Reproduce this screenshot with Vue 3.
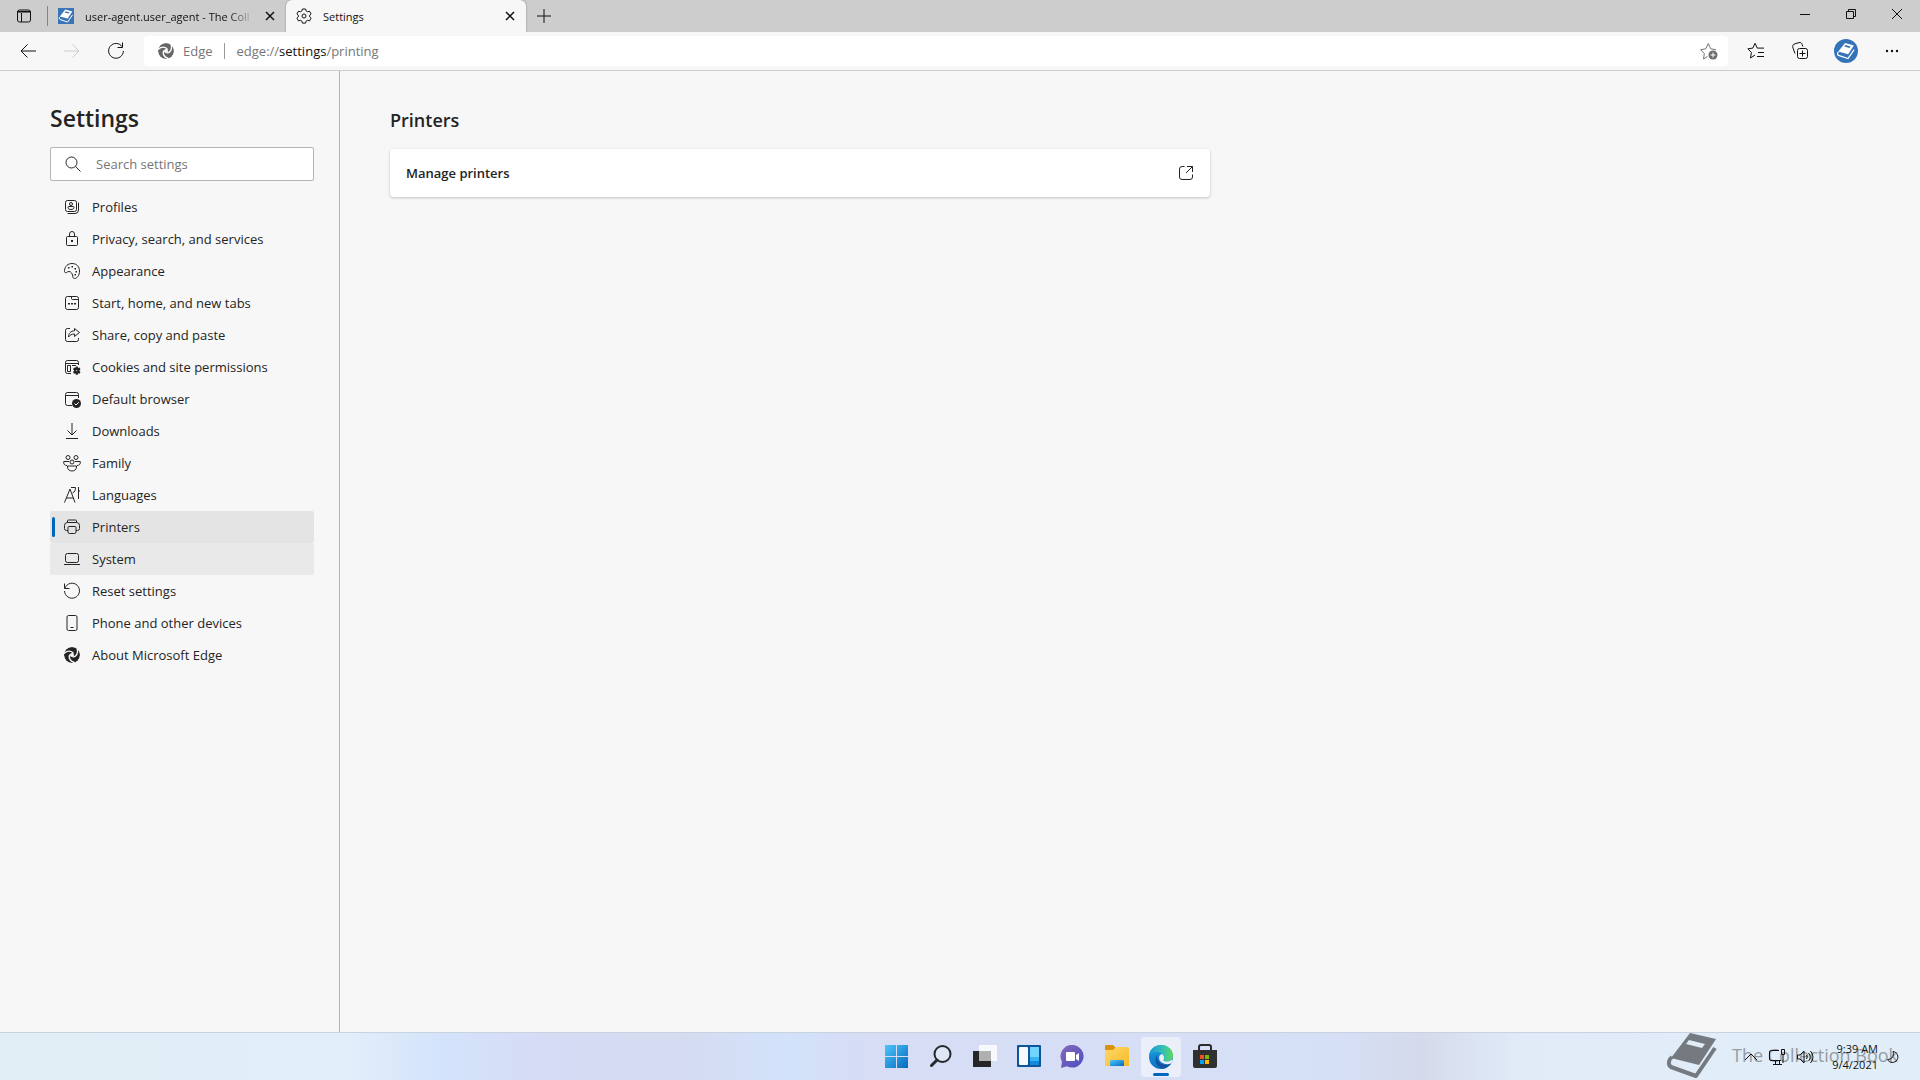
<template>
  <div class="desktop">
    <header class="tabstrip">
      <button class="tab-actions" aria-label="Tab actions menu">
        <svg width="18" height="18" viewBox="0 0 18 18">
          <rect x="2.5" y="3" width="13" height="12" rx="2" />
          <path d="M2.5 5h13M3 4.500h12M6.500 6v9" />
        </svg>
      </button>
      <div class="tab">
        <svg class="favicon" width="16" height="16" viewBox="0 0 16 16">
          <rect width="16" height="16" fill="#3a74b8" stroke="none" />
          <use href="#book" />
        </svg>
        <span class="tab-title faded">user-agent.user_agent - The Coll</span>
        <button class="close" aria-label="Close tab">
          <svg width="10" height="10" viewBox="0 0 10 10"><path d="M1 1l8 8M9 1l-8 8" /></svg>
        </button>
      </div>
      <div class="tab active">
        <svg class="favicon" width="16" height="16" viewBox="0 0 16 16">
          <path
            d="M6.400 1l-.5 1.900-1.500.9-1.900-.6L.9 5.900l1.400 1.300v1.700L.9 10.200l1.600 2.700 1.900-.6 1.500.9.500 1.900h3.200l.5-1.900 1.500-.9 1.900.6 1.600-2.700-1.400-1.300V7.200l1.400-1.300-1.600-2.700-1.900.6-1.500-.9L9.600 1z"
          />
          <circle cx="8" cy="8" r="2" />
        </svg>
        <span class="tab-title">Settings</span>
        <button class="close" aria-label="Close tab">
          <svg width="10" height="10" viewBox="0 0 10 10"><path d="M1 1l8 8M9 1l-8 8" /></svg>
        </button>
      </div>
      <button class="new-tab" aria-label="New tab">
        <svg width="14" height="14" viewBox="0 0 14 14"><path d="M7 0v14M0 7h14" /></svg>
      </button>
      <div class="window-controls">
        <button aria-label="Minimize">
          <svg width="10" height="10" viewBox="0 0 10 10"><path d="M0 5.500h10" /></svg>
        </button>
        <button aria-label="Restore">
          <svg width="10" height="10" viewBox="0 0 10 10">
            <path d="M.5 2.500h7v7h-7zM2.500 2.500v-2h7v7h-2" />
          </svg>
        </button>
        <button aria-label="Close">
          <svg width="10" height="10" viewBox="0 0 10 10"><path d="M0 0l10 10M10 0L0 10" /></svg>
        </button>
      </div>
    </header>

    <div class="toolbar">
      <button class="tool" aria-label="Back">
        <svg width="16" height="16" viewBox="0 0 16 16"><path d="M16 8H1M7.500 1.500L1 8l6.500 6.500" /></svg>
      </button>
      <button class="tool disabled" aria-label="Forward" disabled>
        <svg width="16" height="16" viewBox="0 0 16 16"><path d="M0 8h15M8.500 1.500L15 8l-6.500 6.500" /></svg>
      </button>
      <button class="tool" aria-label="Refresh">
        <svg width="18" height="18" viewBox="0 0 18 18">
          <path d="M15.200 4.800A7.400 7.400 0 1 0 16.400 9M15.500.5v5h-5" />
        </svg>
      </button>
      <div class="omnibox">
        <svg class="site" width="16" height="16" viewBox="0 0 16 16"><use href="#edge-mono" /></svg>
        <span class="site-name">Edge</span>
        <span class="url">edge://<b>settings</b>/printing</span>
        <button class="favorite" aria-label="Add this page to favorites">
          <svg width="18" height="18" viewBox="0 0 18 18">
            <path d="M7.500 14.500L3.500 17l.8-5.300L.7 7.700l5.100-.9L8.300 1.500l2.400 5.300 5.300.9" />
            <circle cx="13" cy="13" r="4.500" class="dot" />
            <path class="plus" d="M13 10.500v5M10.500 13h5" />
          </svg>
        </button>
      </div>
      <button class="tool" aria-label="Favorites">
        <svg width="18" height="18" viewBox="0 0 18 18">
          <path d="M8 13l-4.500 3 .9-5.500L.9 6.800l4.900-.7L8 1.300l2.300 4.800H17M11 10.500h6M10 14.500h7" />
        </svg>
      </button>
      <button class="tool" aria-label="Collections">
        <svg width="18" height="18" viewBox="0 0 18 18">
          <rect x="6.500" y="6.500" width="10" height="10" rx="2" />
          <path d="M11.500 8.500v6M8.500 11.500h6M4 11.500L2 6C1.200 3.500 2 2.300 4 1.800l4-1.200c1.800-.4 2.700.4 3.200 2l.6 1.900" />
        </svg>
      </button>
      <button class="tool profile" aria-label="Profile">
        <svg width="24" height="24" viewBox="0 0 24 24">
          <circle cx="12" cy="12" r="12" fill="#3573b9" />
          <g transform="translate(2 2) scale(1.250)"><use href="#book" /></g>
        </svg>
      </button>
      <button class="tool more" aria-label="Settings and more">
        <svg width="14" height="4" viewBox="0 0 14 4">
          <circle cx="2" cy="2" r="1.200" /><circle cx="7" cy="2" r="1.200" /><circle cx="12" cy="2" r="1.200" />
        </svg>
      </button>
    </div>

    <div class="page">
      <aside class="sidebar">
        <h1>Settings</h1>
        <label class="search">
          <svg width="16" height="16" viewBox="0 0 16 16">
            <circle cx="6.500" cy="6.500" r="5.500" /><path d="M10.500 10.500l5 5" />
          </svg>
          <input type="search" placeholder="Search settings" aria-label="Search settings" />
        </label>
        <nav>
          <a
            v-for="item in items"
            :key="item.label"
            href="#"
            :class="{ selected: item.label === selected, hovered: item.label === hovered }"
            @click.prevent="selected = item.label"
          >
            <svg width="18" height="18" viewBox="0 0 18 18">
              <path v-if="item.line" :d="item.line" />
              <path v-if="item.solid" class="solid" :d="item.solid" />
              <path v-if="item.mark" class="mark" :d="item.mark" />
              <g v-if="item.edge" transform="translate(1 1)"><use href="#edge-mono" /></g>
            </svg>
            <span>{{ item.label }}</span>
          </a>
        </nav>
      </aside>
      <main>
        <h2>Printers</h2>
        <a class="card" href="#">
          <span>Manage printers</span>
          <svg width="16" height="16" viewBox="0 0 16 16">
            <path d="M6.500 1.500H4A2.500 2.500 0 0 0 1.500 4v8A2.500 2.500 0 0 0 4 14.500h8a2.500 2.500 0 0 0 2.500-2.500V9.500M9 1.500h5.500V7M14.500 1.500L8 8" />
          </svg>
        </a>
      </main>
    </div>

    <footer class="taskbar">
      <div class="apps">
        <button aria-label="Start">
          <svg width="24" height="24" viewBox="0 0 24 24">
            <path fill="url(#win)" d="M0 0h11v11H0zM12 0h11v11H12zM0 12h11v11H0zM12 12h11v11H12z" />
          </svg>
        </button>
        <button aria-label="Search">
          <svg width="24" height="24" viewBox="0 0 24 24">
            <circle cx="13.500" cy="9" r="8" fill="#dfe6f5" stroke="#26282c" stroke-width="2" />
            <path d="M8 15l-5.500 5.500" stroke="#26282c" stroke-width="3" stroke-linecap="round" />
          </svg>
        </button>
        <button aria-label="Task view">
          <svg width="24" height="24" viewBox="0 0 24 24">
            <rect x="0" y="6" width="18" height="16" fill="#262626" />
            <rect x="6" y="0" width="18" height="16" fill="#fff" opacity=".8" />
            <rect x="6" y="6" width="12" height="10" fill="#b0b0b0" />
          </svg>
        </button>
        <button aria-label="Widgets">
          <svg width="24" height="24" viewBox="0 0 24 24">
            <rect y="0" width="24" height="22" rx="1" fill="#0f5597" />
            <rect x="2" y="2" width="9" height="18" rx="1" fill="#f5f9fd" />
            <rect x="13" y="2" width="9" height="10" fill="#6fd5ff" />
            <rect x="13" y="12" width="9" height="4" fill="#36b2f5" />
            <rect x="13" y="16" width="9" height="4" fill="#1489dc" />
          </svg>
        </button>
        <button aria-label="Chat">
          <svg width="24" height="24" viewBox="0 0 24 24">
            <path fill="url(#chat)" d="M11.500 0A11.300 11.300 0 1 1 6 21.300L0 23l1-6.200A11.300 11.300 0 0 1 11.500 0z" />
            <rect x="5" y="7" width="9" height="9" rx="1" fill="#fff" />
            <path fill="#fff" d="M15 10l3-2v8l-3-2z" />
          </svg>
        </button>
        <button aria-label="File Explorer">
          <svg width="24" height="24" viewBox="0 0 24 24">
            <path fill="#d9930f" d="M1 0h7l3 3v5H0V1z" />
            <path fill="url(#folder)" d="M11 2h12l1 1v18H0V5h8z" />
            <path fill="url(#win)" d="M6 15h12l1 1v5H5v-5z" />
          </svg>
        </button>
        <button class="running" aria-label="Microsoft Edge">
          <svg width="24" height="24" viewBox="0 0 24 24">
            <circle cx="12" cy="12" r="12" fill="url(#edge-blue)" />
            <path fill="url(#edge-green)" d="M0 10.500C1 4 6 0 12 0c7 0 12 5 12 10.800 0 4-3 5.700-6 5.700-2.600 0-4.300-.8-3.200-2.200C16.500 11 13 7 8.500 7 4.500 7 1.500 8.500 0 10.500z" />
            <path fill="#1252a0" d="M8.800 9.500C4.500 13 6.500 22 14 23.800c3.500-.5 6.500-2.700 8.200-5.200-6 3-12.200.8-13.700-4.600-.5-1.700-.4-3.200.3-4.500z" />
            <path fill="#e9eef9" d="M14.800 14.300C13.700 15.700 15.400 16.500 18 16.500c2 0 4-.7 5.100-1.900.5.8.2 2.700-1.200 4-5.400 1.600-10.600-.5-11.700-4.600-.5-2.200.5-4.500 2.400-5 2 .3 3.100 3 2.200 5.300z" />
          </svg>
        </button>
        <button aria-label="Microsoft Store">
          <svg width="24" height="24" viewBox="0 0 24 24">
            <path fill="none" stroke="#2b2b2b" stroke-width="2" d="M6 7V2a2 2 0 0 1 2-2h8a2 2 0 0 1 2 2v5" />
            <path fill="#303030" d="M0 5h24v16a2 2 0 0 1-2 2H2a2 2 0 0 1-2-2z" />
            <path fill="#f05022" d="M7 10h4v4H7z" /><path fill="#7fba00" d="M12 10h4v4h-4z" />
            <path fill="#00a4ef" d="M7 15h4v4H7z" /><path fill="#ffb900" d="M12 15h4v4h-4z" />
          </svg>
        </button>
      </div>
      <div class="tray">
        <button aria-label="Show hidden icons">
          <svg width="14" height="16" viewBox="0 0 14 16"><path d="M1 11l6-6 6 6" /></svg>
        </button>
        <button aria-label="Network">
          <svg width="18" height="18" viewBox="0 0 18 18">
            <path d="M11 2.500H3A1.500 1.500 0 0 0 1.500 4v7A1.500 1.500 0 0 0 3 12.500h10M5 16.500h9M7.500 13v3M11.500 13v3M13.500 1.500h3v5h-3zM15 7v8" />
          </svg>
        </button>
        <button aria-label="Volume">
          <svg width="18" height="18" viewBox="0 0 18 18">
            <path d="M1.500 7v4h2.500l4 4V3L4 7zM10.500 7q1.500 2 0 4M12.500 5q3.500 4 0 8M14.500 3q5 6 0 12" />
          </svg>
        </button>
        <div class="clock"><span>9:39 AM</span><span>9/4/2021</span></div>
        <button aria-label="Focus assist">
          <svg width="14" height="16" viewBox="0 0 14 16">
            <path d="M7 2.500a5.500 5.500 0 1 1-5.500 8C5 10.500 8.500 8 7 2.500z" />
          </svg>
        </button>
      </div>
      <div class="watermark">
        <svg width="50" height="46" viewBox="0 0 50 46">
          <path fill="#747a80" d="M23 0l26 6-17 26L4 25z" />
          <path fill="#e2ecf7" d="M22 7l16 4-3 4-16-4z" />
          <path fill="none" stroke="#747a80" stroke-width="4" stroke-linejoin="round" d="M5 24c-4 3-4 8-1 10l25 9 19-28" />
        </svg>
        <span>The Collection Book</span>
      </div>
    </footer>

    <svg class="defs" width="0" height="0" aria-hidden="true">
      <defs>
        <g id="book">
          <path fill="#fff" d="M7.300 1.500l7 2-4.600 7.100-7.900-2.200z" />
          <path fill="#3573b9" d="M7.500 3.200l4.200 1.200-.9 1.200-4.200-1.200z" />
          <path fill="none" stroke="#fff" stroke-width="1" d="M2 8.800c-1.200.9-.9 2.200 0 2.700l7.600 2.600 4.900-7.200" />
        </g>
        <mask id="blades" maskUnits="userSpaceOnUse" x="0" y="0" width="16" height="16">
          <circle cx="8" cy="8" r="8" fill="#fff" stroke="none" />
          <circle cx="8" cy="8" r="2" fill="#000" stroke="none" />
          <g fill="none" stroke="#000" stroke-width="1.400">
            <path d="M9.500 6.400C7.500 3.400 3.500 3.200 0 6.500" />
            <path d="M9.500 6.400C7.500 3.400 3.500 3.200 0 6.500" transform="rotate(120 8 8)" />
            <path d="M9.500 6.400C7.500 3.400 3.500 3.200 0 6.500" transform="rotate(240 8 8)" />
          </g>
        </mask>
        <g id="edge-mono">
          <circle cx="8" cy="8" r="8" mask="url(#blades)" />
        </g>
        <linearGradient id="win" x1="0" y1="0" x2="1" y2="1">
          <stop offset="0" stop-color="#4cc6fb" /><stop offset="1" stop-color="#0669bd" />
        </linearGradient>
        <linearGradient id="chat" x1="0" y1="0" x2="1" y2="1">
          <stop offset="0" stop-color="#8668b8" /><stop offset="1" stop-color="#4a50c4" />
        </linearGradient>
        <linearGradient id="folder" x1="0" y1="0" x2="1" y2="1">
          <stop offset="0" stop-color="#ffd967" /><stop offset="1" stop-color="#f5b92a" />
        </linearGradient>
        <linearGradient id="edge-blue" x1="0" y1="0" x2="0" y2="1">
          <stop offset="0" stop-color="#1ba3e0" /><stop offset="1" stop-color="#0c6fc4" />
        </linearGradient>
        <linearGradient id="edge-green">
          <stop offset="0" stop-color="#1c95d8" /><stop offset=".6" stop-color="#35c1b4" /><stop offset="1" stop-color="#62d957" />
        </linearGradient>
      </defs>
    </svg>
  </div>
</template>

<script setup>
import { ref } from "vue";

const selected = ref("Printers");
const hovered = ref("System");

const items = [
  {
    label: "Profiles",
    line: "M4.500 2.500h7a2 2 0 0 1 2 2v7a2 2 0 0 1-2 2h-7a2 2 0 0 1-2-2v-7a2 2 0 0 1 2-2zM15.500 4.500V12a3.500 3.500 0 0 1-3.500 3.500H4.500M8 4.500a1.500 1.500 0 1 1 0 3 1.500 1.500 0 0 1 0-3zM6 8.500h4a1 1 0 0 1 1 1c0 1.500-1.500 2-3 2s-3-.5-3-2a1 1 0 0 1 1-1z",
  },
  {
    label: "Privacy, search, and services",
    line: "M4.500 6.500h9a1 1 0 0 1 1 1v7a1 1 0 0 1-1 1h-9a1 1 0 0 1-1-1v-7a1 1 0 0 1 1-1zM6.500 6.500V4a2.500 2.500 0 0 1 5 0v2.500",
    solid: "M8 10h2v2H8z",
  },
  {
    label: "Appearance",
    line: "M1.500 8.500C2 4 5 1.500 9 1.500c5 0 7.500 3.500 7.500 7.500 0 4.500-2.500 7.500-5 7.500-2 0-1.500-2-2-3.500C9 11.500 8 9.500 6 9.500c-2 0-2 1.500-3.500 1.200C1.500 10.500 1.400 9.500 1.500 8.500z",
    solid: "M5 5h1.500v1.500H5zM8.500 4H10v1.500H8.500zM11.500 6H13v1.500h-1.500zM12.500 9H14v1.500h-1.500zM11.500 12H13v1.500h-1.500z",
  },
  {
    label: "Start, home, and new tabs",
    line: "M4.500 2.500h9a2 2 0 0 1 2 2v9a2 2 0 0 1-2 2h-9a2 2 0 0 1-2-2v-9a2 2 0 0 1 2-2zM8.500 2.500v2a1 1 0 0 0 1 1h6",
    solid: "M5 9h2v1.500H5zM8 9h2v1.500H8zM11 9h2v1.500h-2z",
  },
  {
    label: "Share, copy and paste",
    line: "M7 2.500H4.500a2 2 0 0 0-2 2v9a2 2 0 0 0 2 2h9a2 2 0 0 0 2-2V12M11.500 2.500l5 4-5 4V8C8.500 8 7 9 5.500 11c0-3.500 2-6 6-6.200z",
  },
  {
    label: "Cookies and site permissions",
    line: "M8 15.500H4.500a2 2 0 0 1-2-2v-9a2 2 0 0 1 2-2h9a2 2 0 0 1 2 2V7M2.500 5.500h13M4.500 7.500h3v6h-3zM9 7.500h4",
    solid: "M12.800 8.500h1.900l.4 1.400 1.400-.4 1 1.700-1 1.100v.6l1 1.100-1 1.700-1.400-.4-.4 1.400h-1.900l-.4-1.400-1.400.4-1-1.700 1-1.100v-.6l-1-1.100 1-1.700 1.400.4z",
    mark: "M13.200 12.600h1",
  },
  {
    label: "Default browser",
    line: "M9 15.500H4.500a2 2 0 0 1-2-2v-9a2 2 0 0 1 2-2h9a2 2 0 0 1 2 2V8M2.500 5.500h13",
    solid: "M13.500 9a4.500 4.500 0 1 1 0 9 4.500 4.500 0 0 1 0-9z",
    mark: "M11.500 13.500l1.500 1.500 2.800-2.800",
  },
  { label: "Downloads", line: "M9 1v12M4.500 8.500L9 13l4.500-4.500M3 16.500h12" },
  {
    label: "Family",
    line: "M5 1.500a2 2 0 1 1 0 4 2 2 0 0 1 0-4zM13 1.500a2 2 0 1 1 0 4 2 2 0 0 1 0-4zM9 6a2 2 0 1 1 0 4 2 2 0 0 1 0-4zM6 7.500H.8C.3 10 1.500 11.500 4 11.500M12 7.500h5.200c.5 2.500-.7 4-3.200 4M4.500 12h9v1c0 2.500-2 4-4.500 4s-4.500-1.500-4.500-4z",
  },
  {
    label: "Languages",
    line: "M1.500 16.500L7 3l5 13.500M3.500 12h7M8 1.500h4.500c0 3-1 4.500-3 5.500M15.500 1v12M15.500 5H17",
  },
  {
    label: "Printers",
    line: "M5 12.500H3.500a2 2 0 0 1-2-2v-3a3 3 0 0 1 3-3h9a3 3 0 0 1 3 3v3a2 2 0 0 1-2 2H13M4.500 4.500V3a1 1 0 0 1 1-1h7a1 1 0 0 1 1 1v1.500M6 8.500h6a1 1 0 0 1 1 1V14a1.500 1.500 0 0 1-1.500 1.500h-5A1.500 1.500 0 0 1 5 14V9.500a1 1 0 0 1 1-1z",
  },
  {
    label: "System",
    line: "M4.500 3.500h9a2 2 0 0 1 2 2v5a2 2 0 0 1-2 2h-9a2 2 0 0 1-2-2v-5a2 2 0 0 1 2-2zM1 14.500h16",
  },
  { label: "Reset settings", line: "M1.500 1.500v5h5M2 6a7.500 7.500 0 1 1-.5 3" },
  {
    label: "Phone and other devices",
    line: "M5.500 1.500h7a1.500 1.500 0 0 1 1.500 1.500v12a1.500 1.500 0 0 1-1.500 1.500h-7A1.500 1.500 0 0 1 4 15V3a1.500 1.500 0 0 1 1.500-1.500zM7.500 13.500h3",
  },
  { label: "About Microsoft Edge", edge: true },
];
</script>

<style>
body {
  margin: 0;
}
</style>

<style scoped>
.desktop {
  min-height: 100vh;
  display: flex;
  flex-direction: column;
  background-color: #f7f7f7;
  color: #242424;
  font-family: "Open Sans", "Noto Sans", sans-serif;
  font-size: 13px;
}
.desktop * {
  box-sizing: border-box;
}
.defs {
  position: absolute;
}
button {
  display: flex;
  align-items: center;
  justify-content: center;
  padding: 0;
  border: none;
  background-color: transparent;
  color: inherit;
  font: inherit;
}
a {
  color: inherit;
  text-decoration: none;
}
svg {
  flex-shrink: 0;
}
.tabstrip svg,
.toolbar svg,
.page svg,
.tray svg {
  fill: none;
  stroke: currentColor;
}
.tabstrip {
  display: flex;
  height: 32px;
  background-color: #cdcdcd;
  color: #111111;
  font-size: 11px;
}
.tab-actions {
  width: 48px;
  position: relative;
}
.tab-actions::after {
  content: "";
  position: absolute;
  right: 0;
  top: 6px;
  height: 20px;
  border-right: 1px solid #858585;
}
.tab {
  width: 238px;
  display: flex;
  align-items: center;
  padding: 0 8px 0 10px;
}
.tab.active {
  width: 240px;
  background-color: #f7f7f7;
  border-radius: 6px 6px 0 0;
  box-shadow: 0 0 2px rgba(0, 0, 0, 0.4);
  clip-path: inset(0 -3px 0 -3px);
}
.tab-title {
  flex: 1;
  margin: 0 8px 0 11px;
  white-space: nowrap;
}
.tab-title.faded {
  mask-image: linear-gradient(to right, #000 85%, transparent);
}
.tabstrip .favicon use {
  stroke: none;
}
.close {
  width: 16px;
  height: 16px;
}
.close svg {
  stroke-width: 1.5;
}
.new-tab {
  width: 36px;
}
.window-controls {
  display: flex;
  margin-left: auto;
  padding-bottom: 4px;
}
.window-controls button {
  width: 46px;
}
.toolbar {
  height: 39px;
  display: flex;
  align-items: center;
  gap: 4px;
  padding: 0 8px 0 8px;
  border-bottom: 1px solid #cccccc;
  color: #111111;
}
.tool {
  width: 40px;
  height: 30px;
}
.tool.disabled {
  color: #cccccc;
}
.tool.profile {
  width: 44px;
}
.tool.profile svg {
  stroke: none;
}
.tool.more svg {
  fill: #111111;
  stroke: none;
}
.omnibox {
  flex: 1;
  height: 30px;
  display: flex;
  align-items: center;
  margin: 0 4px;
  padding: 0 10px 0 14px;
  border-radius: 4px;
  background-color: #ffffff;
  color: #767676;
}
.omnibox .site {
  fill: #666666;
  stroke: none;
}
.site-name {
  margin-left: 9px;
  padding-right: 11px;
  line-height: 16px;
  border-right: 1px solid #999999;
}
.url {
  flex: 1;
  margin-left: 12px;
}
.url b {
  font-weight: 400;
  color: #111111;
}
.favorite .dot {
  fill: #6b6b6b;
  stroke: none;
}
.favorite .plus {
  stroke: #ffffff;
}
.page {
  flex: 1;
  display: flex;
}
.sidebar {
  width: 340px;
  padding: 31px 25px 0 50px;
  border-right: 1px solid #b5b5b5;
}
h1 {
  margin: 0 0 13px;
  font-size: 23px;
  line-height: 32px;
  font-weight: 600;
}
.search {
  height: 34px;
  display: flex;
  align-items: center;
  margin-bottom: 10px;
  padding: 0 14px;
  gap: 15px;
  border: 1px solid #b3b3b3;
  border-radius: 2px;
  background-color: #ffffff;
}
.search input {
  flex: 1;
  min-width: 0;
  padding: 0;
  border: none;
  outline: none;
  background-color: transparent;
  font: inherit;
}
.search input::placeholder {
  color: #767676;
  opacity: 1;
}
nav {
  display: flex;
  flex-direction: column;
}
nav a {
  height: 32px;
  display: flex;
  align-items: center;
  gap: 11px;
  padding-left: 13px;
  position: relative;
  border-radius: 2px;
}
nav a.selected {
  background-color: #e4e4e4;
}
nav a.hovered {
  background-color: #e9e9e9;
}
nav a.selected::before {
  content: "";
  position: absolute;
  left: 2px;
  top: 6px;
  width: 3px;
  height: 20px;
  border-radius: 2px;
  background-color: #0067b8;
}
nav svg .solid,
nav svg use {
  fill: #242424;
  stroke: none;
}
nav svg .mark {
  stroke: #f7f7f7;
}
main {
  flex: 1;
  padding: 35px 50px 0;
}
h2 {
  margin: 0 0 15px;
  font-size: 18px;
  line-height: 28px;
  font-weight: 600;
}
.card {
  max-width: 820px;
  height: 48px;
  display: flex;
  align-items: center;
  justify-content: space-between;
  padding: 0 16px;
  border-radius: 4px;
  background-color: #ffffff;
  font-weight: 600;
  box-shadow: 0 1px 3px rgba(0, 0, 0, 0.22);
}
.taskbar {
  height: 48px;
  display: grid;
  grid-template-columns: 1fr auto 1fr;
  align-items: center;
  padding-left: 182px;
  position: relative;
  border-top: 1px solid #c9d2e0;
  background: linear-gradient(
    to right,
    #e1eef6 0%,
    #e2eef8 18%,
    #d3e3fb 23%,
    #d6dcf5 28%,
    #d5dbf0 35%,
    #d2e2fa 41%,
    #d6ddf5 45%,
    #d6dff6 62%,
    #d5e0f7 69%,
    #d5daeb 74%,
    #e0ebf7 79%,
    #e1eef8 100%
  );
}
.apps {
  grid-column: 2;
  display: flex;
  gap: 4px;
}
.apps button {
  width: 40px;
  height: 40px;
  position: relative;
  border-radius: 4px;
}
.apps svg {
  overflow: visible;
}
.apps .running {
  background-color: #eaeffa;
}
.running::after {
  content: "";
  position: absolute;
  left: 12px;
  bottom: 1px;
  width: 16px;
  height: 3px;
  border-radius: 2px;
  background-color: #0067c0;
}
.tray {
  display: flex;
  justify-content: flex-end;
  align-items: center;
  padding-right: 20px;
  position: relative;
  z-index: 1;
  color: #111111;
}
.tray button {
  margin-left: 8px;
}
.tray button + button {
  margin-left: 10px;
}
.clock {
  display: flex;
  flex-direction: column;
  margin-left: 18px;
  font-size: 11px;
  line-height: 16px;
  text-align: right;
}
.watermark {
  position: absolute;
  right: 22px;
  top: 0;
  display: flex;
  align-items: flex-start;
  gap: 15px;
  color: #959ca3;
  font-size: 18px;
  line-height: 44px;
}
</style>
